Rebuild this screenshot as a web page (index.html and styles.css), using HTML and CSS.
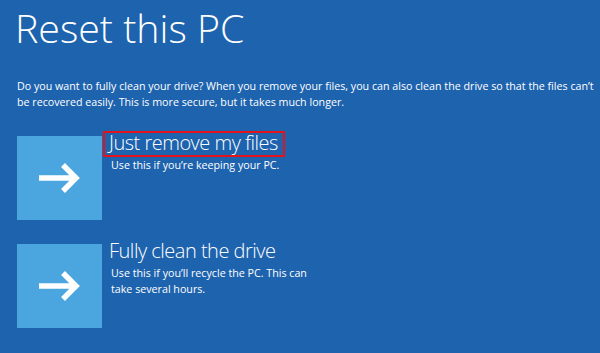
FILE: index.html
```html
<!DOCTYPE html>
<html>
<head>
<meta charset="utf-8">
<link rel="stylesheet" href="styles.css">
</head>
<body>
<div class="page">
  <h1 class="title">Reset this PC</h1>
  <p class="intro">Do you want to fully clean your drive? When you remove your files, you can also clean the drive so that the files can’t be recovered easily. This is more secure, but it takes much longer.</p>
  <div class="options">
    <div class="option">
      <div class="tile">
        <svg width="42" height="30" viewBox="0 0 42 30"><path d="M0 15 H37 M24 2 L37 15 L24 28" fill="none" stroke="#fff" stroke-width="5.5"/></svg>
      </div>
      <div class="text">
        <div class="head highlighted">Just remove my files</div>
        <div class="desc">Use this if you’re keeping your PC.</div>
      </div>
    </div>
    <div class="option">
      <div class="tile">
        <svg width="42" height="30" viewBox="0 0 42 30"><path d="M0 15 H37 M24 2 L37 15 L24 28" fill="none" stroke="#fff" stroke-width="5.5"/></svg>
      </div>
      <div class="text">
        <div class="head">Fully clean the drive</div>
        <div class="desc">Use this if you’ll recycle the PC. This can<br>take several hours.</div>
      </div>
    </div>
  </div>
</div>
</body>
</html>
```
FILE: styles.css
```css
html, body {
  margin: 0;
  height: 100%;
}
body {
  background: #1e63ae;
  color: #fff;
  font-family: "Open Sans", "Noto Sans", sans-serif;
  overflow: hidden;
}
.page {
  padding: 3px 0 0 17px;
}
.title {
  margin: 0 0 0 -2px;
  font-weight: 300;
  font-size: 39.3px;
  line-height: 50px;
}
.intro {
  margin: 25px 0 0 0;
  font-size: 10.7px;
  line-height: 16px;
  width: 583px;
}
.options {
  margin-top: 26px;
  display: flex;
  flex-direction: column;
  gap: 24px;
}
.option {
  display: flex;
  align-items: flex-start;
}
.tile {
  width: 85px;
  height: 84px;
  background: #4ba5de;
  display: flex;
  align-items: center;
  justify-content: center;
  flex: none;
}
.text {
  margin-left: 1px;
  margin-top: -5px;
}
.head {
  display: inline-block;
  font-weight: 300;
  font-size: 20px;
  letter-spacing: -0.5px;
  line-height: 19px;
  padding: 0 5px 3px 4px;
  border: 2px solid transparent;
}
.head.highlighted {
  border-color: #e2131b;
}
.desc {
  font-size: 10.7px;
  line-height: 16px;
  margin-left: 8px;
}
```
